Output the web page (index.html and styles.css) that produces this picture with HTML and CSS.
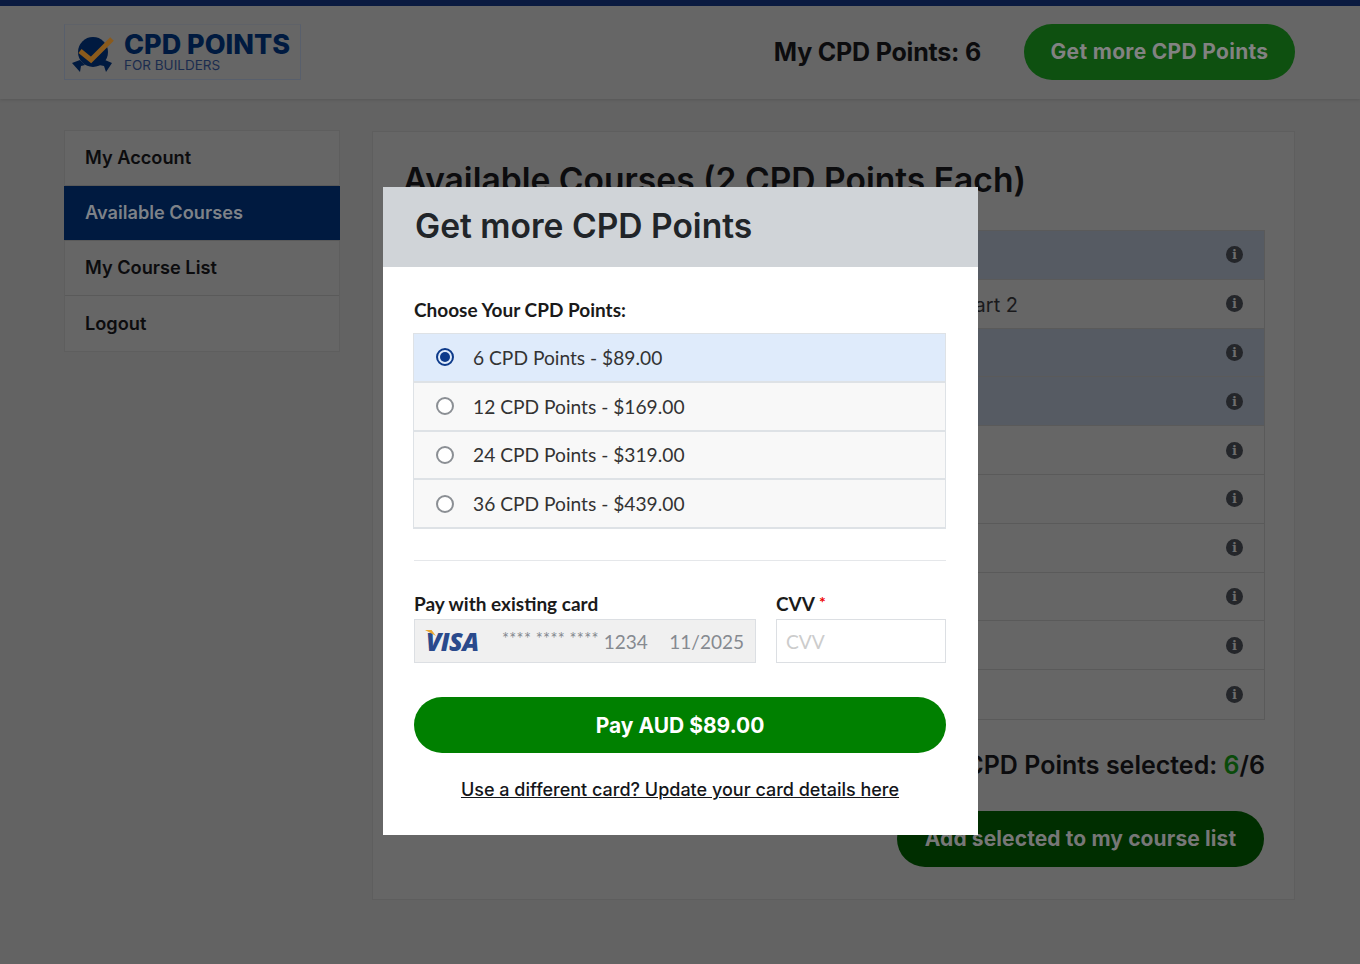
FILE: index.html
```html
<!DOCTYPE html>
<html lang="en">
<head>
<meta charset="UTF-8" />
<meta name="viewport" content="width=device-width, initial-scale=1" />
<title>Available Courses</title>
<link rel="stylesheet" href="styles.css">
</head>
<body>

<header class="topbar">
  <div class="logo">
    <svg class="logo-mark" width="46" height="40" viewBox="0 0 46 40">
      <circle cx="23" cy="18" r="15" fill="#001a40"/>
      <path d="M2 29 L10 26 L15 31 L11 32 L10 38 Z M42 29 L35 26 L29 31 L34 32 L36 38 Z" fill="#001a40"/>
      <path d="M10 17 L21 26 L42 5" fill="none" stroke="#8a5a1c" stroke-width="5"/>
    </svg>
    <div class="logo-text">
      <div class="logo-title">CPD POINTS</div>
      <div class="logo-sub">FOR BUILDERS</div>
    </div>
  </div>
  <div class="my-points">My CPD Points: 6</div>
  <button class="btn-green btn-top">Get more CPD Points</button>
</header>

<div class="page">
  <nav class="sidebar">
    <a href="#">My Account</a>
    <a href="#" class="active">Available Courses</a>
    <a href="#">My Course List</a>
    <a href="#">Logout</a>
  </nav>

  <main class="content">
    <h1>Available Courses (2 CPD Points Each)</h1>
    <div class="courses">
      <div class="course selected"><span class="course-name"></span><i class="info">i</i></div>
      <div class="course"><span class="course-name">Part 2</span><i class="info">i</i></div>
      <div class="course selected"><span class="course-name"></span><i class="info">i</i></div>
      <div class="course selected"><span class="course-name"></span><i class="info">i</i></div>
      <div class="course"><span class="course-name"></span><i class="info">i</i></div>
      <div class="course"><span class="course-name"></span><i class="info">i</i></div>
      <div class="course"><span class="course-name"></span><i class="info">i</i></div>
      <div class="course"><span class="course-name"></span><i class="info">i</i></div>
      <div class="course"><span class="course-name"></span><i class="info">i</i></div>
      <div class="course"><span class="course-name"></span><i class="info">i</i></div>
    </div>
    <div class="selected-count">CPD Points selected: <span class="count-green">6</span>/6</div>
    <div class="add-row">
      <button class="btn-green btn-add">Add selected to my course list</button>
    </div>
  </main>
</div>

<div class="modal">
  <div class="modal-header">Get more CPD Points</div>
  <div class="modal-body">
    <div class="field-label">Choose Your CPD Points:</div>
    <div class="options">
      <label class="option checked"><span class="radio"></span>6 CPD Points - $89.00</label>
      <label class="option"><span class="radio"></span>12 CPD Points - $169.00</label>
      <label class="option"><span class="radio"></span>24 CPD Points - $319.00</label>
      <label class="option"><span class="radio"></span>36 CPD Points - $439.00</label>
    </div>
    <hr class="divider">
    <div class="pay-row">
      <div class="pay-card">
        <div class="field-label">Pay with existing card</div>
        <div class="card-box">
          <span class="visa">VISA</span>
          <span class="card-num"><span class="stars">**** **** ****</span> 1234</span>
          <span class="card-exp">11/2025</span>
        </div>
      </div>
      <div class="pay-cvv">
        <div class="field-label">CVV <span class="req">*</span></div>
        <div class="cvv-box">CVV</div>
      </div>
    </div>
    <button class="btn-pay">Pay AUD $89.00</button>
    <div class="update-link"><a href="#">Use a different card? Update your card details here</a></div>
  </div>
</div>

</body>
</html>
```

FILE: styles.css
```css
* {
  box-sizing: border-box;
}
body {
  margin: 0;
  height: 964px;
  overflow: hidden;
  position: relative;
  background: #636363;
  color: #0c0c0e;
  font-family: Inter, 'Liberation Sans', sans-serif;
}
.topbar {
  height: 99px;
  border-top: 6px solid #0a1a40;
  background: #666;
  box-shadow: 0 1px 3px rgba(0,0,0,0.12);
  display: flex;
  align-items: center;
  padding: 0 65px 0 64px;
}
.logo {
  width: 237px;
  height: 56px;
  margin-top: -2px;
  border: 1px solid #585f6c;
  border-top-color: #5f6268;
  display: flex;
  align-items: center;
  padding-left: 5px;
}
.logo-mark {
  margin-right: 8px;
  margin-top: 5px;
}
.logo-title {
  color: #001a40;
  font-weight: 800;
  font-size: 27px;
  line-height: 26px;
  white-space: nowrap;
}
.logo-sub {
  color: #1b2c4e;
  font-size: 13.5px;
  line-height: 14px;
}
.my-points {
  margin-left: auto;
  margin-top: -2px;
  font-size: 25px;
  font-weight: 700;
  letter-spacing: -0.2px;
}
.btn-green {
  border: none;
  border-radius: 28px;
  height: 56px;
  font-family: inherit;
  font-weight: 700;
  font-size: 21px;
}
.btn-top {
  width: 271px;
  margin-left: 43px;
  margin-top: -2px;
  background: #0e5010;
  color: #828282;
  letter-spacing: 0.3px;
}
.page {
  display: flex;
  align-items: flex-start;
  padding: 31px 65px 0 64px;
  gap: 32px;
}
.sidebar {
  width: 276px;
  flex: none;
  background: #666;
  border: 1px solid #5e5e5e;
}
.sidebar a {
  display: block;
  height: 55px;
  line-height: 52px;
  padding-left: 20px;
  color: #0c0c0e;
  text-decoration: none;
  font-size: 18.2px;
  font-weight: 600;
  border-bottom: 1px solid #5a5a5a;
}
.sidebar a:last-child {
  border-bottom: none;
  line-height: 54px;
}
.sidebar a.active {
  margin: 0 -1px;
  padding-left: 21px;
  background: #001a40;
  color: #7e8288;
}
.content {
  flex: 1;
  height: 769px;
  padding: 0 29px 0 30px;
  background: #666;
  border: 1px solid #5e5e5e;
  margin-top: 1px;
}
.content h1 {
  margin: 27px 0 0;
  height: 71px;
  font-size: 33.6px;
  line-height: 42px;
  font-weight: 600;
  white-space: nowrap;
}
.courses {
  border: 1px solid #5a5a5a;
}
.course {
  height: 48.8px;
  display: flex;
  align-items: center;
  justify-content: space-between;
  padding-right: 21px;
  border-bottom: 1px solid #5a5a5a;
  font-size: 20px;
  color: #1a1a1c;
}
.course:last-child {
  border-bottom: none;
}
.course.selected {
  background: #565b63;
}
.course-name {
  width: 614px;
  padding-top: 2px;
  text-align: right;
}
.info {
  width: 17px;
  height: 17px;
  border-radius: 50%;
  background: #24262a;
  color: #6e6e6e;
  font: bold 13px/17px 'DejaVu Serif', serif;
  text-align: center;
}
.selected-count {
  margin-top: 29px;
  text-align: right;
  font-size: 25px;
  line-height: 32px;
  font-weight: 600;
}
.count-green {
  color: #0a4a0a;
}
.add-row {
  display: flex;
  justify-content: flex-end;
  margin-top: 30px;
}
.btn-add {
  width: 367px;
  margin-right: 1px;
  background: #002e00;
  color: #777;
  letter-spacing: 0.1px;
}
.modal {
  position: absolute;
  left: 383px;
  top: 187px;
  width: 595px;
  height: 648px;
  background: #fff;
}
.modal-header {
  height: 80px;
  padding-left: 32px;
  background: #d0d4d8;
  color: #212529;
  font-size: 33.6px;
  font-weight: 600;
  line-height: 78px;
}
.modal-body {
  padding: 31px 32px 0 31px;
  font-family: Lato, 'Liberation Sans', sans-serif;
}
.field-label {
  font-size: 19px;
  font-weight: 700;
  line-height: 24px;
  color: #1a1a1a;
}
.options {
  margin: 11px 0 0 -1px;
  border: 1px solid #dee2e6;
  border-bottom: none;
}
.option {
  height: 48.75px;
  display: flex;
  align-items: center;
  padding-left: 22px;
  background: #f8f8f8;
  border-bottom: 2px solid #dee2e6;
  font-size: 19.2px;
  color: #333;
}
.option.checked {
  background: #dfebfb;
}
.radio {
  width: 18px;
  height: 18px;
  margin-right: 19px;
  border: 2px solid #8b8f94;
  border-radius: 50%;
  background: #fff;
}
.option.checked .radio {
  border-color: #0d3a8a;
  padding: 2px;
  background: #0d3a8a content-box;
}
.divider {
  margin: 31px 0 0;
  border: none;
  border-top: 1px solid #e5e7ea;
}
.pay-row {
  display: flex;
  gap: 20px;
  margin-top: 31px;
}
.pay-card {
  width: 342px;
}
.pay-cvv {
  flex: 1;
}
.card-box {
  height: 44px;
  margin-top: 3px;
  display: flex;
  align-items: center;
  padding: 0 11px;
  background: #f0f0f0;
  border: 1px solid #dcdfe3;
  color: #868a90;
  font-size: 19px;
}
.visa {
  width: 76px;
  position: relative;
  color: #2a4a8c;
  font: italic 800 25px 'Open Sans', sans-serif;
  letter-spacing: -0.6px;
}
.visa::before {
  content: "";
  position: absolute;
  left: -1px;
  top: 6px;
  width: 11px;
  height: 6px;
  background: #e8a735;
  clip-path: polygon(0 0, 60% 0, 100% 100%);
}
.stars {
  font-size: 16.5px;
  position: relative;
  top: -4px;
  letter-spacing: 0.3px;
}
.card-exp {
  margin-left: auto;
}
.cvv-box {
  height: 44px;
  margin-top: 3px;
  padding-left: 9px;
  border: 1px solid #dcdfe3;
  color: #ccc;
  font-size: 19.2px;
  line-height: 44px;
}
.req {
  color: #e00;
  font-size: 16px;
  line-height: 0;
  vertical-align: 3px;
}
.btn-pay {
  display: block;
  width: 100%;
  height: 56px;
  margin-top: 34px;
  border: none;
  border-radius: 28px;
  background: #008000;
  color: #fff;
  font-family: Inter, sans-serif;
  font-size: 21px;
  font-weight: 700;
}
.update-link {
  margin-top: 23px;
  text-align: center;
  font-family: Inter, sans-serif;
  font-size: 18px;
  font-weight: 500;
  line-height: 28px;
}
.update-link a {
  color: #14161a;
}
```
